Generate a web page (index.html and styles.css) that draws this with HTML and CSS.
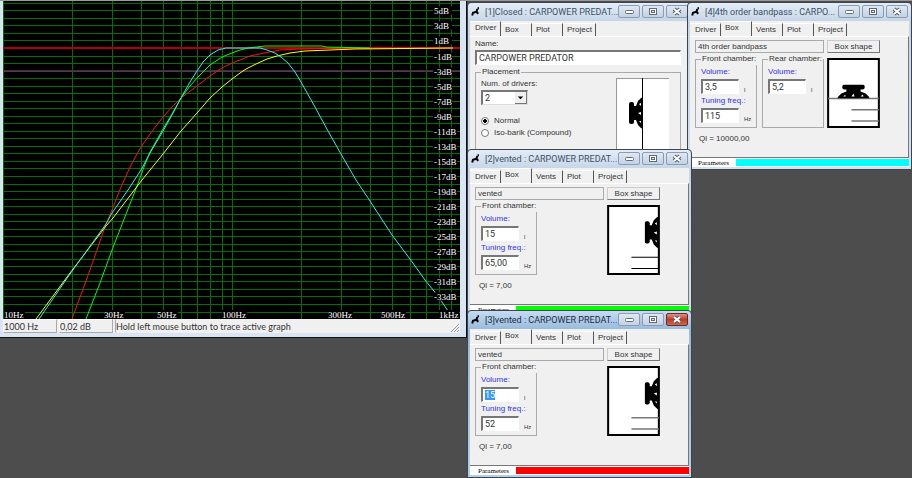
FILE: index.html
```html
<!DOCTYPE html>
<html lang="en">
<head>
    <meta charset="UTF-8">
    <meta name="viewport" content="width=device-width, initial-scale=1.0">
    <title>Speaker Box Simulator</title>
    <link rel="stylesheet" href="styles.css">
</head>
<body>
    <!-- shared drawings -->
    <svg class="defs" width="0" height="0">
        <symbol id="logo" viewBox="0 0 9 10">
            <path d="M6.5 1.2h1.5M6.3 2L5.5 4.5 6.8 6M5.3 4.8L2 5.8 1.2 8.5M6 5L7 7" fill="none" stroke="#000" stroke-width="2"/>
        </symbol>
        <symbol id="speaker" viewBox="0 0 14 32">
            <rect x="0" y="5" width="5" height="22" rx="2"/>
            <path d="M4 9L7 9 9 4 12 1 14 0V32L12 31 9 28 7 23 4 23z"/>
            <path d="M10 7l2-1v3zM9 16l3-1v3zM10 24l2 0v2z" fill="#fff"/>
        </symbol>
        <symbol id="min" viewBox="0 0 20 11">
            <rect x="6.5" y="4.5" width="8" height="3" rx="1" fill="#fff" stroke="#5f6b7a"/>
        </symbol>
        <symbol id="max" viewBox="0 0 20 11">
            <rect x="6.5" y="2.5" width="7" height="6" fill="#fff" stroke="#5f6b7a"/>
            <rect x="8.5" y="4.5" width="3" height="2" fill="#dbe5f0" stroke="#5f6b7a"/>
        </symbol>
        <symbol id="close" viewBox="0 0 20 11">
            <path d="M7 3l6 5M13 3l-6 5" stroke="#4f5b6b" stroke-width="4"/>
            <path d="M7 3l6 5M13 3l-6 5" stroke="#fff" stroke-width="2"/>
        </symbol>
    </svg>

    <main class="desktop">
        <section class="graph-window">
            <svg class="plot" viewBox="3 1 457 318">
                <rect x="3" y="1" width="457" height="318" fill="#000"/>
                <g id="grid"></g>
                <path class="zero" d="M3 48H460"/>
                <path class="minus3" d="M3 70.5H460"/>
                <polyline class="curve red" points="72,319 90,270 106,224 112,210 119,192 125,178 132,163 141,147 150,134 163,117 172,107 181,98 197,86 210,76 222,68 232,63 240,60 250,56 264,53 280,50 300,49 355,48 453,48"/>
                <polyline class="curve green" points="86,319 100,283 112,250 128,209 137,186 144,167 150,152 163,129 172,114 181,98 190,86 197,78 210,65 222,57 232,53 240,50 248,48 265,46 322,46 326,47 370,48"/>
                <polyline class="curve yellow" points="36,319 70,273 83,256 106,226 113,218 142,180 163,154 181,131 197,113 210,98 222,87 232,79 240,73 246,69 256,64 267,59 277,56 290,53 305,51 330,50 355,49 453,48"/>
                <polyline class="curve cyan" points="39,319 70,274 83,256 106,224 112,213 128,190 141,170 150,153 163,131 172,115 181,98 190,82 197,71 203,62 210,55 218,50 226,48 240,48 260,48 267,50 275,53 281,57 288,63 295,72 301,82 315,107 328,131 341,154 356,180 370,201 392,235 410,259 425,280 438,296 450,314 453,319"/>
                <g id="labels"></g>
            </svg>
            <footer class="status">
                <span class="cell">1000 Hz</span>
                <span class="cell">0,02 dB</span>
                <span class="cell hint">Hold left mouse button to trace active graph</span>
                <svg class="grip" viewBox="0 0 10 10"><path d="M1 9L9 1M4 9L9 4M7 9L9 7" stroke="#999"/></svg>
            </footer>
        </section>

        <section class="window win1">
            <header class="titlebar">
                <svg class="logo"><use href="#logo"/></svg>
                <h2>[1]Closed : CARPOWER PREDAT...</h2>
                <button aria-label="Minimize"><svg><use href="#min"/></svg></button>
                <button aria-label="Maximize"><svg><use href="#max"/></svg></button>
                <button aria-label="Close"><svg><use href="#close"/></svg></button>
            </header>
            <div class="client">
                <nav class="tabs">
                    <button class="active">Driver</button><button>Box</button><button>Plot</button><button>Project</button>
                </nav>
                <div class="page driver">
                    <label for="name1">Name:</label>
                    <input id="name1" class="wide" type="text" value="CARPOWER PREDATOR">
                    <fieldset class="placement">
                        <legend>Placement</legend>
                        <div class="options">
                            <label for="num">Num. of drivers:</label>
                            <div class="combo">
                                <select id="num"><option>1</option><option selected>2</option></select>
                                <svg viewBox="0 0 12 12"><path d="M3 5h6L6 8z"/></svg>
                            </div>
                            <label class="radio"><input type="radio" name="mount" checked>Normal</label>
                            <label class="radio"><input type="radio" name="mount">Iso-barik (Compound)</label>
                        </div>
                        <svg class="mount" viewBox="0 0 53 72">
                            <rect width="53" height="72" fill="#fff"/>
                            <path d="M0 .5H53M.5 0V72" stroke="#999"/>
                            <path d="M26.5 0V72" stroke="#000"/>
                            <use href="#speaker" x="13" y="19" width="14" height="32"/>
                        </svg>
                    </fieldset>
                </div>
            </div>
        </section>

        <section class="window win4">
            <header class="titlebar">
                <svg class="logo"><use href="#logo"/></svg>
                <h2>[4]4th order bandpass : CARPO...</h2>
                <button aria-label="Minimize"><svg><use href="#min"/></svg></button>
                <button aria-label="Maximize"><svg><use href="#max"/></svg></button>
                <button aria-label="Close"><svg><use href="#close"/></svg></button>
            </header>
            <div class="client">
                <nav class="tabs">
                    <button>Driver</button><button class="active">Box</button><button>Vents</button><button>Plot</button><button>Project</button>
                </nav>
                <div class="page box">
                    <input class="name" type="text" aria-label="Box type" value="4th order bandpass" readonly>
                    <button class="shape">Box shape</button>
                    <div class="chambers">
                        <fieldset>
                            <legend>Front chamber:</legend>
                            <label for="vol4">Volume:</label>
                            <div class="field"><input id="vol4" type="text" value="3,5"><small>l</small></div>
                            <label for="freq4">Tuning freq.:</label>
                            <div class="field"><input id="freq4" type="text" value="115"><small>Hz</small></div>
                        </fieldset>
                        <fieldset>
                            <legend>Rear chamber:</legend>
                            <label for="rear4">Volume:</label>
                            <div class="field"><input id="rear4" type="text" value="5,2"><small>l</small></div>
                        </fieldset>
                    </div>
                    <svg class="picture" viewBox="0 0 52 69">
                        <path d="M1 1H51V68H1z" fill="#fff" stroke="#000" stroke-width="2"/>
                        <path d="M1 40H51M24 51H51M24 62H51" stroke="#777" stroke-width="1.5"/>
                        <use href="#speaker" x="0" y="0" width="14" height="32" transform="translate(42 26) rotate(90)"/>
                    </svg>
                    <p class="ql">Ql = 10000,00</p>
                </div>
                <footer class="params"><span>Parameters</span><i class="bar cyan"></i></footer>
            </div>
        </section>

        <section class="window win2">
            <header class="titlebar">
                <svg class="logo"><use href="#logo"/></svg>
                <h2>[2]vented : CARPOWER PREDAT...</h2>
                <button aria-label="Minimize"><svg><use href="#min"/></svg></button>
                <button aria-label="Maximize"><svg><use href="#max"/></svg></button>
                <button aria-label="Close"><svg><use href="#close"/></svg></button>
            </header>
            <div class="client">
                <nav class="tabs">
                    <button>Driver</button><button class="active">Box</button><button>Vents</button><button>Plot</button><button>Project</button>
                </nav>
                <div class="page box">
                    <input class="name" type="text" aria-label="Box type" value="vented" readonly>
                    <button class="shape">Box shape</button>
                    <div class="chambers">
                        <fieldset>
                            <legend>Front chamber:</legend>
                            <label for="vol2">Volume:</label>
                            <div class="field"><input id="vol2" type="text" value="15"><small>l</small></div>
                            <label for="freq2">Tuning freq.:</label>
                            <div class="field"><input id="freq2" type="text" value="65,00"><small>Hz</small></div>
                        </fieldset>
                    </div>
                    <svg class="picture" viewBox="0 0 52 69">
                        <path d="M1 1H51V68H1z" fill="#fff" stroke="#000" stroke-width="2"/>
                        <path d="M24 51.5H51M24 62.5H51" stroke="#000"/>
                        <use href="#speaker" x="37" y="11" width="14" height="32"/>
                    </svg>
                    <p class="ql">Ql = 7,00</p>
                </div>
                <footer class="params"><span>Parameters</span><i class="bar green"></i></footer>
            </div>
        </section>

        <section class="window win3 focused">
            <header class="titlebar">
                <svg class="logo"><use href="#logo"/></svg>
                <h2>[3]vented : CARPOWER PREDAT...</h2>
                <button aria-label="Minimize"><svg><use href="#min"/></svg></button>
                <button aria-label="Maximize"><svg><use href="#max"/></svg></button>
                <button class="close" aria-label="Close"><svg><use href="#close"/></svg></button>
            </header>
            <div class="client">
                <nav class="tabs">
                    <button>Driver</button><button class="active">Box</button><button>Vents</button><button>Plot</button><button>Project</button>
                </nav>
                <div class="page box">
                    <input class="name" type="text" aria-label="Box type" value="vented" readonly>
                    <button class="shape">Box shape</button>
                    <div class="chambers">
                        <fieldset>
                            <legend>Front chamber:</legend>
                            <label for="vol3">Volume:</label>
                            <div class="field"><input id="vol3" type="text" value="15"><small>l</small></div>
                            <label for="freq3">Tuning freq.:</label>
                            <div class="field"><input id="freq3" type="text" value="52"><small>Hz</small></div>
                        </fieldset>
                    </div>
                    <svg class="picture" viewBox="0 0 52 69">
                        <path d="M1 1H51V68H1z" fill="#fff" stroke="#000" stroke-width="2"/>
                        <path d="M24 51H51M24 62H51" stroke="#777" stroke-width="1.5"/>
                        <use href="#speaker" x="37" y="11" width="14" height="32"/>
                    </svg>
                    <p class="ql">Ql = 7,00</p>
                </div>
                <footer class="params"><span>Parameters</span><i class="bar red"></i></footer>
            </div>
        </section>
    </main>

    <script>
        const grid = document.getElementById('grid');
        const labels = document.getElementById('labels');
        let lines = '';
        let texts = '';

        // one line per dB, 0 dB is at y = 48
        for (let db = 6; db >= -35; db--) {
            const y = Math.round(48 + -db * 7.53) + 0.5;
            lines += `<path d="M3 ${y}H460"/>`;
            if (db % 2 !== 0 && db > -34) {
                const width = db < -9 ? 24 : 19;
                texts += `<rect x="433" y="${y - 4}" width="${width}" height="8"/>`;
                texts += `<text x="434" y="${y + 3}">${db}dB</text>`;
            }
        }
        // log frequency axis, 10 Hz - 1 kHz
        for (const decade of [10, 100]) {
            for (let n = 1; n < 10; n++) {
                const x = Math.round(3 + Math.log10(n * decade / 10) * 229) + 0.5;
                lines += `<path d="M${x} 1V319"/>`;
            }
        }
        for (const [x, text, width] of [[4, '10Hz', 21], [104, '30Hz', 21], [157, '50Hz', 21], [222, '100Hz', 25], [328, '300Hz', 25], [381, '500Hz', 25], [439, '1kHz', 20]]) {
            texts += `<rect x="${x}" y="310" width="${width}" height="9"/>`;
            texts += `<text x="${x}" y="318">${text}</text>`;
        }
        grid.innerHTML = lines;
        labels.innerHTML = texts;

        document.getElementById('vol3').select();
    </script>
</body>
</html>
```
FILE: styles.css
```css
* {
    box-sizing: border-box;
}
body {
    margin: 0;
    background-color: #4d4d4d;
    font-family: "Liberation Sans", Arial, sans-serif;
    font-size: 8px;
    line-height: 12px;
    color: #333;
}
button, input, select {
    font: inherit;
    color: inherit;
    margin: 0;
    padding: 0;
}
.defs {
    position: absolute;
}
.desktop {
    position: relative;
    min-height: 100vh;
    overflow: hidden;
    border-top: 1px solid #999;
}

/* graph */
.graph-window {
    width: 467px;
    padding: 0 6px 4px 3px;
    background-color: #d9e5f2;
    border-right: 1px solid #111;
    border-bottom: 1px solid #111;
}
.plot {
    display: block;
    width: 100%;
}
#grid path {
    stroke: #007000;
}
.zero {
    stroke: #b00000;
    stroke-width: 2;
}
.minus3 {
    stroke: #800080;
}
.curve {
    fill: none;
    stroke-width: 1;
}
.curve.red { stroke: #ff1010; }
.curve.green { stroke: #00ff00; }
.curve.yellow { stroke: #ffff00; }
.curve.cyan { stroke: #20f0ff; }
#labels text {
    font-family: "Liberation Serif", serif;
    font-size: 9px;
    fill: #fff;
}
.status {
    display: flex;
    gap: 2px;
    height: 14px;
    background-color: #f0f0f0;
    font-family: Lato, sans-serif;
    font-size: 9px;
    line-height: 13px;
}
.cell {
    width: 54px;
    border: 1px solid #fff;
    border-right-color: #aaa;
    border-bottom-color: #aaa;
    white-space: nowrap;
}
.hint {
    flex: 1;
    border-color: #f0f0f0 #f0f0f0 #f0f0f0 #aaa;
}
.grip {
    width: 10px;
    align-self: flex-end;
    height: 10px;
}

/* child windows */
.window {
    position: absolute;
    width: 225px;
    padding: 0 2px 2px;
    border: 1px solid #3c444d;
    border-radius: 4px 4px 0 0;
    background: linear-gradient(#e4edf7, #c6d6e8 18px, #d3e0ee);
}
.focused {
    background: linear-gradient(#c5dcf2, #98bbdd 18px, #b5cfea);
}
.win1 { left: 467px; top: 1px; }
.win4 { left: 687px; top: 1px; }
.win2 { left: 467px; top: 148px; }
.win3 { left: 467px; top: 309px; }
.titlebar {
    display: flex;
    gap: 2px;
    height: 18px;
    padding: 2px 1px 0 1px;
}
.titlebar h2 {
    flex: 1;
    min-width: 0;
    margin: 0 0 0 3px;
    font-family: Roboto, sans-serif;
    font-size: 9px;
    font-weight: normal;
    line-height: 14px;
    white-space: nowrap;
    color: #3f5064;
}
.focused h2 {
    color: #1c2c3c;
}
.titlebar .logo {
    flex: none;
    width: 9px;
    height: 10px;
    margin-top: 2px;
}
.titlebar button {
    flex: none;
    width: 22px;
    height: 13px;
    border: 1px solid #8c9bb0;
    border-radius: 2px;
    background: linear-gradient(#dfe8f3, #c3d2e4);
}
.titlebar button svg {
    display: block;
    width: 20px;
    height: 11px;
}
.titlebar .close {
    border-color: #6b2b22;
    background: linear-gradient(#dd9484, #c03a22 50%, #cc6a50);
}
.client {
    background-color: #f0f0f0;
}
.tabs {
    display: flex;
    height: 15px;
    align-items: flex-end;
}
.tabs button {
    width: 31px;
    height: 13px;
    padding-left: 4px;
    border: 0;
    border-top: 1px solid #fff;
    border-right: 1px solid #555;
    background-color: #f0f0f0;
    text-align: left;
    line-height: 12px;
}
.tabs button:first-child {
    padding-left: 5px;
}
.tabs button:last-child {
    width: 33px;
}
.tabs .active {
    height: 15px;
    padding-bottom: 3px;
}
.page {
    height: 122px;
    padding: 3px 7px 0 5px;
    border-top: 1px solid #fff;
    border-right: 1px solid #777;
    border-bottom: 1px solid #777;
}
input[type="text"] {
    display: block;
    height: 15px;
    padding: 0 2px;
    border: 1px solid #777;
    border-width: 2px 1px 1px 2px;
    border-right-color: #fff;
    border-bottom-color: #fff;
    border-radius: 0;
    background-color: #fff;
    outline: none;
}
input::selection {
    background-color: #3399ff;
    color: #fff;
}
fieldset {
    min-width: 0;
    margin: 0;
    padding: 0 5px;
    border: 1px solid #aaa;
}
legend {
    padding: 0 1px;
    line-height: 12px;
    white-space: nowrap;
}
.box {
    display: grid;
    grid-template-columns: 129px 53px;
    grid-template-rows: 13px 75px 14px;
    column-gap: 3px;
}
.box input.name {
    width: 100%;
    height: 13px;
    border: 1px solid #aaa;
    background-color: #f0f0f0;
}
.shape {
    border: 1px solid #999;
    border-color: #ccc #777 #777 #ccc;
    background-color: #f0f0f0;
    line-height: 10px;
}
.chambers {
    display: flex;
    gap: 5px;
}
.chambers fieldset {
    width: 62px;
    height: 75px;
}
.chambers label {
    display: block;
    height: 14px;
    line-height: 14px;
    color: #3333ee;
    white-space: nowrap;
}
.field {
    display: flex;
    gap: 5px;
    height: 15px;
}
.field input {
    width: 38px;
}
.field input, .wide, .combo select {
    font-family: Roboto, sans-serif;
    font-size: 9px;
}
.field small {
    align-self: flex-end;
    font-size: 6px;
    line-height: 8px;
}
.picture {
    width: 53px;
    height: 70px;
    align-self: end;
}
.ql {
    margin: 0;
    padding: 5px 0 0 4px;
}
.driver {
    height: 131px;
    padding: 1px 7px 0 5px;
}
.driver label {
    display: block;
}
.wide {
    width: 100%;
}
.placement {
    display: flex;
    justify-content: space-between;
    margin-top: 1px;
}
.combo {
    position: relative;
    width: 47px;
    margin-bottom: 10px;
}
.combo select {
    display: block;
    width: 47px;
    height: 15px;
    padding-left: 2px;
    border: 1px solid #777;
    border-width: 2px 1px 1px 2px;
    border-right-color: #ddd;
    border-bottom-color: #ddd;
    border-radius: 0;
    background-color: #fff;
    appearance: none;
}
.combo svg {
    position: absolute;
    top: 2px;
    right: 1px;
    width: 12px;
    height: 12px;
    border: 1px solid #777;
    border-width: 0 1px 1px 0;
    background-color: #f0f0f0;
    pointer-events: none;
}
.driver .radio {
    display: flex;
    align-items: center;
    gap: 5px;
}
.radio input {
    width: 8px;
    height: 8px;
    border: 1px solid #777;
    border-radius: 50%;
    background-color: #fff;
    appearance: none;
}
.radio input:checked {
    background: radial-gradient(#000 2px, #fff 2px);
}
.mount {
    width: 53px;
    height: 72px;
    margin-right: 6px;
}
.params {
    display: flex;
    height: 9px;
    padding: 1px 0;
    background-color: #fff;
}
.params span {
    width: 46px;
    padding-left: 8px;
    font-family: "Liberation Serif", serif;
    font-size: 7px;
    line-height: 8px;
    color: #000;
}
.bar {
    flex: 1;
}
.bar.cyan { background-color: #00ffff; }
.bar.green { background-color: #00ff00; }
.bar.red { background-color: #ff0000; }
```
